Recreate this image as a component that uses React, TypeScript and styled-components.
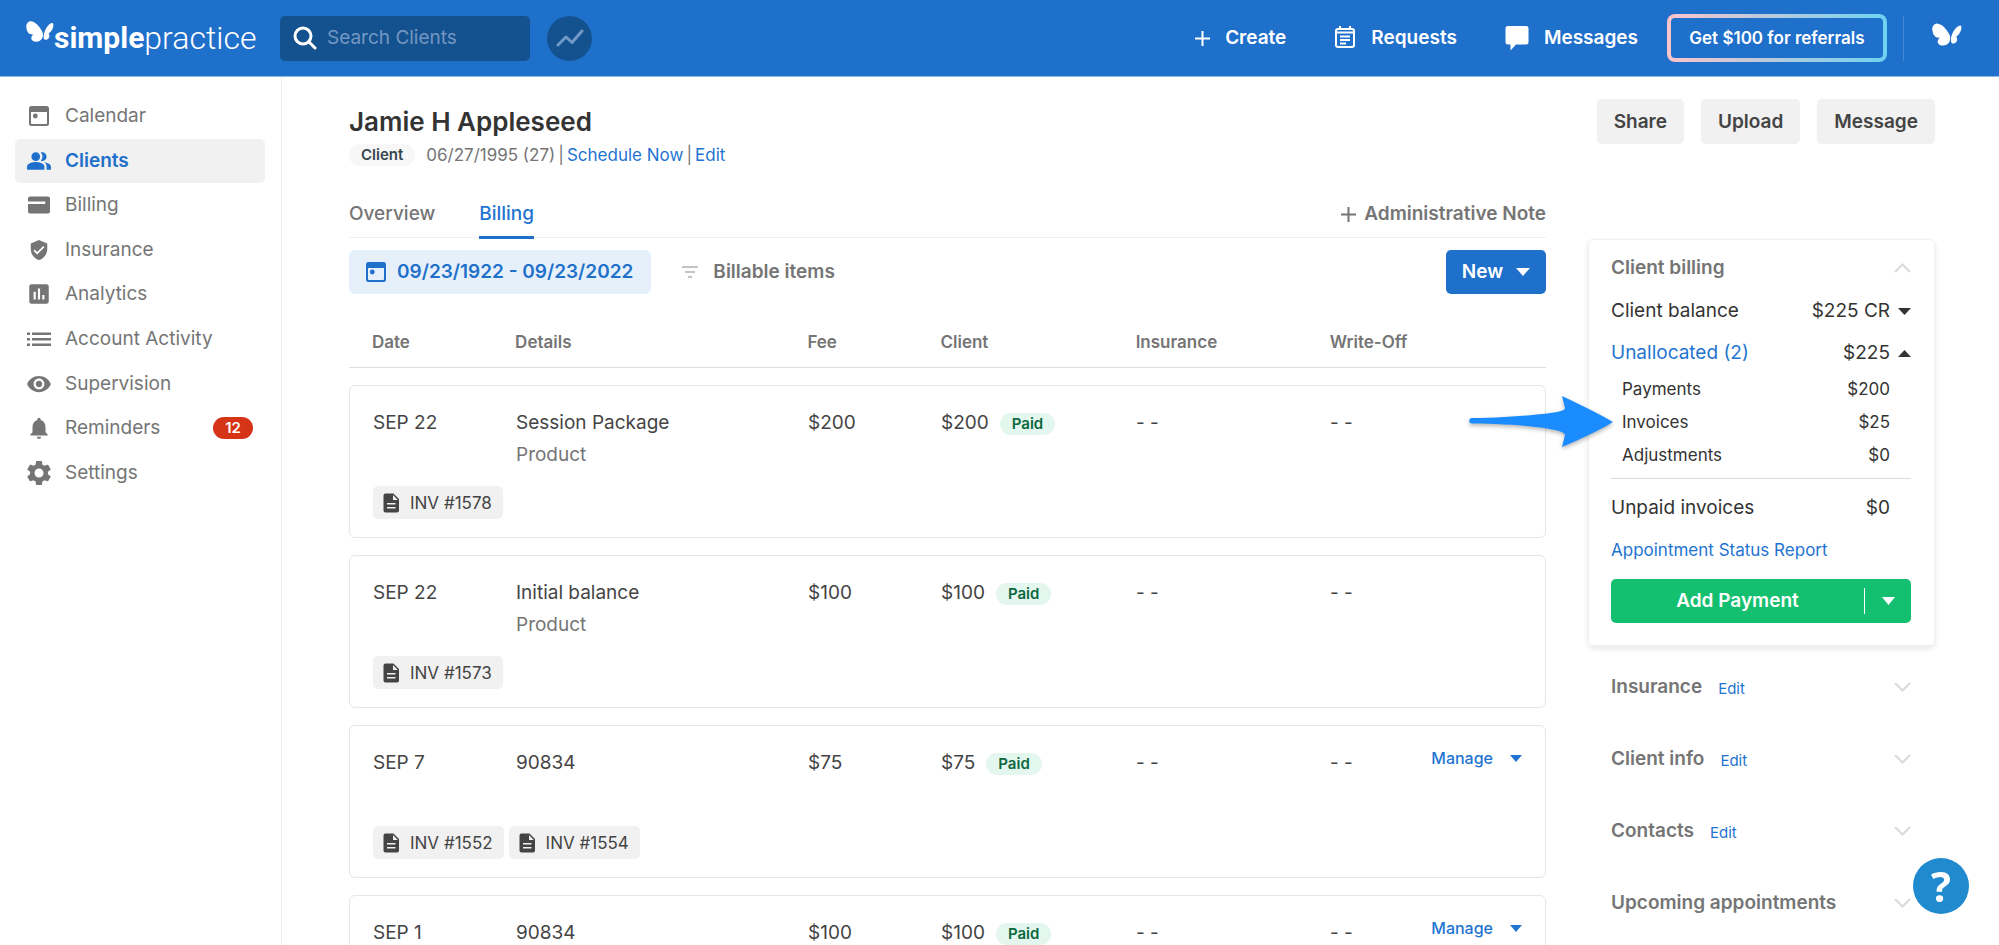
import React from "react";
import styled, { createGlobalStyle, css } from "styled-components";
import {
  MdPeopleAlt, MdVerifiedUser, MdInsertChart, MdVisibility, MdNotifications, MdSettings,
} from "react-icons/md";

const c = {
  brand: "#1f70cb", navy: "#13528f", link: "#1f74d1", ink: "#333333", text: "#444444",
  muted: "#757575", line: "#e6e6e6", soft: "#f1f1f1", green: "#14c070",
};

const Global = createGlobalStyle`
  *, *::before, *::after { box-sizing: border-box; }
  body { margin: 0; background: #fff; color: ${c.text}; font: 400 19px/24px Inter, "Liberation Sans", sans-serif; }
  button, input { font: inherit; color: inherit; }
  button { border: 0; background: none; padding: 0; margin: 0; cursor: pointer; }
  a { color: ${c.link}; text-decoration: none; }
  h1, h2, dl, dd, ul { margin: 0; padding: 0; }
  svg { display: block; flex: none; }
`;

const Shell = styled.div`
  height: 100vh; display: flex; flex-direction: column; overflow: hidden;
`;

const TopBar = styled.header`
  flex: none; height: 77px; padding: 0 37px 0 26px; display: flex; align-items: center;
  background: ${c.brand}; border-bottom: 1px solid #8fb8e6; color: #fff;
`;
const Brand = styled.a`
  display: flex; align-items: flex-start; width: 254px; color: #fff;
  font: 400 32px/40px Roboto, "Liberation Sans", sans-serif;
`;
const BrandMark = styled.span`padding-top: 2px;`;
const BrandStrong = styled.span`font-weight: 700; font-size: 30px;`;
const BrandLight = styled.span`font-weight: 300;`;
const SearchBox = styled.label`
  display: flex; align-items: center; gap: 10px; width: 250px; height: 45px; padding: 0 13px;
  border-radius: 5px; background: ${c.navy};
`;
const SearchInput = styled.input`
  flex: 1; min-width: 0; border: 0; padding: 0; background: none; outline: 0; color: #fff;
  &::placeholder { color: #7497c2; opacity: 1; }
`;
const TrendButton = styled.button`
  width: 45px; height: 45px; margin-left: 17px; border-radius: 50%; background: ${c.navy};
  display: grid; place-items: center;
`;
const TopNav = styled.nav`
  margin-left: auto; display: flex; align-items: center;
`;
const TopLink = styled.button`
  display: flex; align-items: center; gap: 15px; margin-right: 48px; font-weight: 600;
`;
const Referral = styled.button`
  width: 220px; height: 48px; margin-left: -19px; border: 4px solid transparent; border-radius: 8px; font-size: 17px; font-weight: 600;
  background: linear-gradient(${c.brand}, ${c.brand}) padding-box, linear-gradient(90deg, #fbc4ca, #6fd3f0) border-box;
`;
const Separator = styled.span`
  width: 1px; height: 45px; margin: 0 28px 0 16px; background: #4487d3;
`;
const AccountButton = styled.button`padding-bottom: 8px;`;

const Frame = styled.div`flex: 1; min-height: 0; display: flex;`;

const Sidebar = styled.nav`
  flex: none; width: 282px; padding: 17px 16px 0 15px; border-right: 1px solid #efefef;
`;
const NavList = styled.ul`
  display: grid; grid-auto-rows: 1fr; height: 401px; list-style: none;
`;
const NavLink = styled.a<{ $active?: boolean }>`
  height: 100%; display: flex; align-items: center; padding: 0 12px 0 12px; border-radius: 5px; color: ${c.muted};
  ${p => p.$active && css`background: ${c.soft}; color: ${c.brand}; font-weight: 600;`}
`;
const NavIcon = styled.span`
  width: 24px; height: 24px; margin-right: 14px; display: flex; align-items: center; justify-content: center;
`;
const Badge = styled.span`
  margin-left: auto; width: 40px; height: 22px; border-radius: 11px; background: #d53416; color: #fff;
  font-size: 15px; line-height: 22px; font-weight: 600; text-align: center;
`;

const Page = styled.main`
  flex: 1; min-width: 0; padding: 22px 64px 0 67px; overflow-y: auto; scrollbar-width: none;
`;
const PageHead = styled.div`
  display: flex; justify-content: space-between; align-items: flex-start; height: 92px;
`;
const ClientName = styled.h1`font-size: 26px; line-height: 36px; font-weight: 600; color: ${c.ink}; padding-top: 5px;`;
const Meta = styled.div`
  display: flex; align-items: center; gap: 3px; margin-top: 4px; font-size: 17px; line-height: 22px; color: ${c.muted};
`;
const Pill = styled.span<{ $tone: "grey" | "green" }>`
  display: inline-block; height: 22px; padding: 0 12px; border-radius: 11px; font-size: 15px; line-height: 22px; font-weight: 600;
  ${p => p.$tone === "green"
    ? css`background: #e4f7ee; color: #0b6840; margin-left: 11px;`
    : css`background: #f7f7f7; color: #37474f; margin-right: 8px;`}
`;
const Actions = styled.div`display: flex; gap: 17px;`;
const SoftButton = styled.button`
  height: 45px; padding: 0 17px; border-radius: 5px; background: ${c.soft}; font-weight: 600;
`;

const Columns = styled.div`display: flex; gap: 42px; align-items: flex-start;`;
const Ledger = styled.section`flex: 1; min-width: 0;`;
const TabRow = styled.div`
  display: flex; height: 47px; align-items: stretch; border-bottom: 1px solid #f0f0f0;
`;
const Tab = styled.a<{ $active?: boolean }>`
  margin: 0 44px -2px 0; padding-top: 11px; font-weight: 500; color: ${c.muted};
  ${p => p.$active && css`color: ${c.link}; border-bottom: 3px solid ${c.brand};`}
`;
const AddNote = styled.button`
  margin-left: auto; display: flex; align-items: center; gap: 8px; font-weight: 600; color: ${c.muted};
`;
const FilterRow = styled.div`display: flex; align-items: center; margin-top: 12px;`;
const DateRange = styled.button`
  display: flex; align-items: center; gap: 11px; height: 44px; padding: 0 18px 0 17px; border-radius: 6px;
  background: #e6f0fa; color: ${c.brand}; font-weight: 600;
`;
const FilterButton = styled.button`
  display: flex; align-items: center; gap: 13px; margin-left: 29px; font-weight: 600; color: ${c.muted};
`;
const NewButton = styled.button`
  margin-left: auto; display: flex; align-items: center; justify-content: center; gap: 13px; width: 100px; height: 44px; border-radius: 5px;
  background: ${c.brand}; color: #fff; font-weight: 600;
`;

const Table = styled.table`display: block; margin-top: 24px;`;
const rowGrid = css`
  display: grid; grid-template-columns: 143fr 292fr 133fr 195fr 194fr 100fr 92fr;
`;
const Head = styled.thead`
  display: block; padding: 12px 24px 12px 23px; border-bottom: 1px solid #dedede;
`;
const HeadRow = styled.tr`${rowGrid}`;
const HeadCell = styled.th`
  padding: 0; text-align: left; white-space: nowrap; font-size: 17px; line-height: 25px; font-weight: 600; color: ${c.muted};
`;
const Card = styled.tbody`
  display: flex; flex-direction: column; height: 153px; margin-top: 17px; padding: 25px 23px 18px;
  border: 1px solid ${c.line}; border-radius: 6px;
`;
const CardRow = styled.tr`${rowGrid}`;
const Cell = styled.td<{ $end?: boolean }>`
  padding: 0; white-space: nowrap;
  ${p => p.$end && css`display: flex; justify-content: flex-end; align-items: flex-start;`}
`;
const Kind = styled.div`margin-top: 8px; color: ${c.muted};`;
const InvoiceRow = styled.tr`display: block; margin-top: auto;`;
const InvoiceCell = styled.td`display: flex; gap: 5px; padding: 0;`;
const Invoice = styled.a`
  display: flex; align-items: center; gap: 10px; height: 33px; padding: 0 11px 0 9px; border-radius: 5px;
  background: ${c.soft}; color: ${c.text}; font-size: 17px;
`;
const Manage = styled.button`
  display: flex; align-items: center; gap: 17px; font-size: 16px; line-height: 14px; font-weight: 500; color: ${c.link};
`;

const Side = styled.aside`flex: none; width: 347px; padding-top: 48px;`;
const PointerAnchor = styled.div`position: relative;`;
const Pointer = styled.svg`
  position: absolute; right: 300px; top: 156px; filter: drop-shadow(0 2px 2px rgba(0,0,0,.3));
`;
const Panel = styled.section`
  height: 407px; padding: 15px 23px 15px 22px; border: 1px solid #f0f0f0; border-radius: 5px; box-shadow: 0 3px 6px rgba(0,0,0,.09);
`;
const PanelTitle = styled.h2`
  font-size: 19px; line-height: 26px; font-weight: 600; color: ${c.muted};
`;
const PanelHead = styled.div`
  display: flex; justify-content: space-between; align-items: center; margin-bottom: 9px;
`;
const Lines = styled.dl`color: ${c.ink};`;
const Line = styled.div<{ $sub?: boolean }>`
  display: flex; align-items: center; justify-content: space-between; height: 42px;
  ${p => p.$sub && css`height: 33px; padding: 0 0 3px 11px; font-size: 17px;`}
`;
const Amount = styled.dd`display: flex; align-items: center; gap: 8px;`;
const CaretSlot = styled.span`width: 13px;`;
const Rule = styled.hr`border: 0; border-top: 1px solid #dcdcdc; margin: 5px 0 8px;`;
const Report = styled.a`display: block; margin-top: 8px; font-size: 17px; line-height: 26px;`;
const SplitButton = styled.div`
  display: flex; align-items: center; height: 44px; margin-top: 16px; border-radius: 5px; background: ${c.green}; color: #fff;
`;
const PayButton = styled.button`flex: 1; height: 26px; border-right: 1px solid #fff; font-weight: 600;`;
const PayMore = styled.button`width: 46px; height: 44px; display: grid; place-items: center;`;
const Section = styled.section`
  display: flex; align-items: center; height: 72px; padding: 0 24px 0 23px;
`;
const SectionList = styled.div`padding-top: 5px;`;
const SectionEdit = styled.a`margin-left: 16px; padding-top: 3px; font-size: 15px;`;
const Toggle = styled.button`margin-left: auto;`;

const Help = styled.button`
  position: fixed; right: 30px; bottom: 31px; width: 56px; height: 56px; border-radius: 50%; background: #1f8ace; color: #fff;
  font: 700 42px/56px "Open Sans", "Noto Sans", sans-serif; text-align: center;
`;

const Caret = ({ w = 13, h = 7, up = false }: { w?: number; h?: number; up?: boolean }) => (
  <svg width={w} height={h} viewBox="0 0 12 7" preserveAspectRatio="none" fill="currentColor" aria-hidden="true">
    <path d={up ? "M0 7h12L6 0z" : "M0 0h12L6 7z"} />
  </svg>
);
const Chevron = ({ up = false }: { up?: boolean }) => (
  <svg width="17" height="10" viewBox="0 0 17 10" fill="none" stroke="#dadada" strokeWidth="2" aria-hidden="true">
    <path d={up ? "M1 9l7.500-7.500L16 9" : "M1 1l7.500 7.500L16 1"} />
  </svg>
);
const Plus = () => (
  <svg width="15" height="15" viewBox="0 0 15 15" stroke="currentColor" strokeWidth="2" aria-hidden="true">
    <path d="M7.500 0v15M0 7.500h15" />
  </svg>
);
const Butterfly = ({ size }: { size: number }) => (
  <svg width={size} height={23} viewBox="0 0 90 68" fill="#fff" aria-hidden="true">
    <path d="M14 1C6 2 0 10 1 20c1 10 4 18 11 22 6 2 10 1 12 2-6 4-9 10-6 16 4 7 14 8 20 6 8-2 12-6 15-12 3-8 2-16-2-22C44 20 32 2 14 1z" />
    <path d="M86 7c-6-1-14 6-20 15-7 11-10 22-9 32 1 7 5 8 11 6 6-3 8-8 7-14 0-3-3-4-1-7C84 34 92 14 86 7z" />
  </svg>
);
const CalendarGlyph = () => (
  <svg width="20" height="20" viewBox="0 0 20 20" fill="currentColor" aria-hidden="true">
    <path fillRule="evenodd" d="M2.500 0h15A2.500 2.500 0 0 1 20 2.500v15a2.500 2.500 0 0 1-2.500 2.500h-15A2.500 2.500 0 0 1 0 17.500v-15A2.500 2.500 0 0 1 2.500 0zM2 6v11.200c0 .5.300.8.800.8h14.400c.5 0 .8-.3.800-.8V6z" />
    <circle cx="6.300" cy="10" r="2.400" />
  </svg>
);
const CardGlyph = () => (
  <svg width="24" height="24" viewBox="0 0 24 24" fill="currentColor" aria-hidden="true">
    <path fillRule="evenodd" d="M3 3.500h18a2 2 0 0 1 2 2v13a2 2 0 0 1-2 2H3a2 2 0 0 1-2-2V11h16.500a.8.800 0 0 0 .8-.8V8.500H1v-3a2 2 0 0 1 2-2z" />
  </svg>
);
const ListGlyph = () => (
  <svg width="24" height="24" viewBox="0 0 24 24" fill="currentColor" aria-hidden="true">
    <path d="M0 5.500h3V8H0zM5 5.500h19V8H5zM0 11h3v2.500H0zM5 11h19v2.500H5zM0 16.500h3V19H0zM5 16.500h19V19H5z" />
  </svg>
);
const DocGlyph = () => (
  <svg width="18" height="20" viewBox="0 0 18 20" fill="currentColor" aria-hidden="true">
    <path fillRule="evenodd" d="M3.500.5h8L17 6v11.500a2 2 0 0 1-2 2H3.500a2 2 0 0 1-2-2v-15a2 2 0 0 1 2-2zM11 2v5h4.800zM5 10v1.500h8.500V10zm0 4v1.500h8.500V14z" />
  </svg>
);

const navItems = [
  { label: "Calendar", icon: <CalendarGlyph /> },
  { label: "Clients", icon: <MdPeopleAlt size={26} />, active: true },
  { label: "Billing", icon: <CardGlyph /> },
  { label: "Insurance", icon: <MdVerifiedUser size={22} /> },
  { label: "Analytics", icon: <MdInsertChart size={26} /> },
  { label: "Account Activity", icon: <ListGlyph /> },
  { label: "Supervision", icon: <MdVisibility size={26} /> },
  { label: "Reminders", icon: <MdNotifications size={26} />, count: 12 },
  { label: "Settings", icon: <MdSettings size={30} /> },
];

const entries = [
  { date: "SEP 22", details: "Session Package", kind: "Product", fee: "$200", invoices: ["INV #1578"] },
  { date: "SEP 22", details: "Initial balance", kind: "Product", fee: "$100", invoices: ["INV #1573"] },
  { date: "SEP 7", details: "90834", fee: "$75", invoices: ["INV #1552", "INV #1554"], manage: true },
  { date: "SEP 1", details: "90834", fee: "$100", invoices: [], manage: true },
];

const sections = [
  { title: "Insurance", edit: true },
  { title: "Client info", edit: true },
  { title: "Contacts", edit: true },
  { title: "Upcoming appointments", edit: false },
];

export default function App() {
  return (
    <Shell>
      <Global />
      <TopBar>
        <Brand href="#" aria-label="simplepractice">
          <BrandMark><Butterfly size={28} /></BrandMark>
          <BrandStrong>simple</BrandStrong><BrandLight>practice</BrandLight>
        </Brand>
        <SearchBox>
          <svg width="24" height="24" viewBox="0 0 24 24" fill="none" stroke="#fff" strokeWidth="3" strokeLinecap="round" aria-hidden="true">
            <circle cx="10" cy="10" r="8" /><path d="M16 16l6 6" />
          </svg>
          <SearchInput type="search" placeholder="Search Clients" aria-label="Search Clients" />
        </SearchBox>
        <TrendButton aria-label="Activity trend">
          <svg width="28" height="18" viewBox="0 0 28 18" fill="none" stroke="#7299c6" strokeWidth="3" strokeLinecap="round" strokeLinejoin="round" aria-hidden="true">
            <path d="M2 16l8-8 6 5.500L26 2" />
          </svg>
        </TrendButton>
        <TopNav>
          <TopLink><Plus />Create</TopLink>
          <TopLink>
            <svg width="22" height="24" viewBox="0 0 22 24" fill="none" stroke="#fff" strokeWidth="2" aria-hidden="true">
              <rect x="2" y="3" width="18" height="18" rx="2" /><path d="M2 6.500h18M6 0v4M16 0v4M6 10.500h10M6 14h10M6 17.500h6" />
            </svg>
            Requests
          </TopLink>
          <TopLink>
            <svg width="24" height="26" viewBox="0 0 24 26" fill="#fff" aria-hidden="true">
              <path d="M3 1h18a2.500 2.500 0 0 1 2.500 2.500V17a2.500 2.500 0 0 1-2.500 2.500H11L5.500 25.500v-6H3A2.500 2.500 0 0 1 .5 17V3.500A2.500 2.500 0 0 1 3 1z" />
            </svg>
            Messages
          </TopLink>
          <Referral>Get $100 for referrals</Referral>
          <Separator />
          <AccountButton aria-label="Account"><Butterfly size={30} /></AccountButton>
        </TopNav>
      </TopBar>

      <Frame>
        <Sidebar aria-label="Main">
          <NavList>
            {navItems.map(n => (
              <li key={n.label}>
                <NavLink href="#" $active={n.active}>
                  <NavIcon>{n.icon}</NavIcon>{n.label}
                  {n.count && <Badge>{n.count}</Badge>}
                </NavLink>
              </li>
            ))}
          </NavList>
        </Sidebar>

        <Page>
          <PageHead>
            <div>
              <ClientName>Jamie H Appleseed</ClientName>
              <Meta>
                <Pill $tone="grey">Client</Pill>
                <span>06/27/1995 (27)</span><span>|</span><a href="#">Schedule Now</a><span>|</span><a href="#">Edit</a>
              </Meta>
            </div>
            <Actions>
              <SoftButton>Share</SoftButton><SoftButton>Upload</SoftButton><SoftButton>Message</SoftButton>
            </Actions>
          </PageHead>

          <Columns>
            <Ledger>
              <TabRow>
                <Tab href="#">Overview</Tab><Tab href="#" $active>Billing</Tab>
                <AddNote><Plus />Administrative Note</AddNote>
              </TabRow>
              <FilterRow>
                <DateRange><CalendarGlyph />09/23/1922 - 09/23/2022</DateRange>
                <FilterButton>
                  <svg width="20" height="14" viewBox="0 0 20 14" stroke="#c4c4c4" strokeWidth="2" aria-hidden="true">
                    <path d="M2 2h16M5 7h10M8 12h4" />
                  </svg>
                  Billable items
                </FilterButton>
                <NewButton>New <Caret w={14} h={8} /></NewButton>
              </FilterRow>
              <Table>
                <Head>
                  <HeadRow>
                    {["Date", "Details", "Fee", "Client", "Insurance", "Write-Off"].map(h => <HeadCell key={h} scope="col">{h}</HeadCell>)}
                  </HeadRow>
                </Head>
                {entries.map((e, i) => (
                  <Card key={i}>
                    <CardRow>
                      <Cell>{e.date}</Cell>
                      <Cell>{e.details}{e.kind && <Kind>{e.kind}</Kind>}</Cell>
                      <Cell>{e.fee}</Cell>
                      <Cell>{e.fee}<Pill $tone="green">Paid</Pill></Cell>
                      <Cell>- -</Cell>
                      <Cell>- -</Cell>
                      <Cell $end>{e.manage && <Manage>Manage <Caret w={12} h={7} /></Manage>}</Cell>
                    </CardRow>
                    <InvoiceRow>
                      <InvoiceCell colSpan={7}>
                        {e.invoices.map(v => <Invoice href="#" key={v}><DocGlyph />{v}</Invoice>)}
                      </InvoiceCell>
                    </InvoiceRow>
                  </Card>
                ))}
              </Table>
            </Ledger>

            <Side>
              <PointerAnchor>
                <Panel>
                  <PanelHead>
                    <PanelTitle>Client billing</PanelTitle>
                    <button aria-label="Collapse client billing"><Chevron up /></button>
                  </PanelHead>
                  <Lines>
                    <Line><dt>Client balance</dt><Amount>$225 CR <Caret /></Amount></Line>
                    <Line><dt><a href="#">Unallocated (2)</a></dt><Amount>$225 <Caret up /></Amount></Line>
                    <Line $sub><dt>Payments</dt><Amount>$200 <CaretSlot /></Amount></Line>
                    <Line $sub><dt>Invoices</dt><Amount>$25 <CaretSlot /></Amount></Line>
                    <Line $sub><dt>Adjustments</dt><Amount>$0 <CaretSlot /></Amount></Line>
                  </Lines>
                  <Rule />
                  <Lines>
                    <Line><dt>Unpaid invoices</dt><Amount>$0 <CaretSlot /></Amount></Line>
                  </Lines>
                  <Report href="#">Appointment Status Report</Report>
                  <SplitButton>
                    <PayButton>Add Payment</PayButton>
                    <PayMore aria-label="More payment options"><Caret h={8} /></PayMore>
                  </SplitButton>
                </Panel>
                <Pointer width="166" height="52" viewBox="0 0 166 52" fill="#1a8cff" aria-hidden="true">
                  <path d="M3 23C38 22.500 77 19.500 90 16.500q6-1.200 6-3.500L93 1q36 17 51 26-16 10-51 25l3-12q0-2-6-4C72 31 38 29 3 28.500a2.700 2.700 0 0 1 0-5.500z" />
                </Pointer>
              </PointerAnchor>
              <SectionList>
                {sections.map(s => (
                  <Section key={s.title}>
                    <PanelTitle>{s.title}</PanelTitle>
                    {s.edit && <SectionEdit href="#">Edit</SectionEdit>}
                    <Toggle aria-label={"Expand " + s.title}><Chevron /></Toggle>
                  </Section>
                ))}
              </SectionList>
            </Side>
          </Columns>
        </Page>
      </Frame>
      <Help aria-label="Help">?</Help>
    </Shell>
  );
}
